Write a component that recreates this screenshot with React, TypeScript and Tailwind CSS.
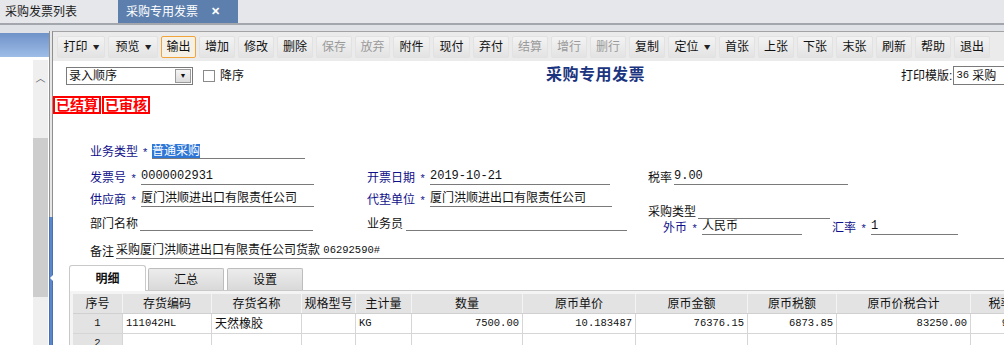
const F = "font-['Liberation_Sans','Noto_Sans_CJK_SC',sans-serif]";
const MONO = "font-['Liberation_Mono','Noto_Sans_CJK_SC',monospace]";

function Btn({ label, w, off, drop, hot }: { label: string; w: string; off?: boolean; drop?: boolean; hot?: boolean }) {
  return (
    <div
      className={`${w} h-[22px] flex items-center justify-center gap-[6px] rounded-[2px] border text-[12px] leading-[14px] ${
        hot
          ? "border-[#f0a43a] bg-[#f6f1e6]"
          : "border-[#e2e2e2] bg-gradient-to-b from-[#f3f3f3] to-[#e3e3e3]"
      } ${off ? "text-[#9a9a9a]" : "text-[#111]"}`}
    >
      <span>{label}</span>
      {drop && <span className="text-[10px] leading-[10px] text-[#222] scale-x-125">▾</span>}
    </div>
  );
}

function Star() {
  return <span className="w-[15px] text-center text-[11px] leading-[14px] text-[#10108a]">*</span>;
}

function Box({ w, children, mono }: { w: string; children?: React.ReactNode; mono?: boolean }) {
  return (
    <div className={`${w} h-[16px] border-b border-[#7a7a7a] flex items-end text-[12px] leading-[15px] whitespace-nowrap ${mono ? MONO + " text-[10.5px]" : ""}`}>
      {children}
    </div>
  );
}

const cols = [
  { t: "序号", w: "w-[50px]" },
  { t: "存货编码", w: "w-[89px]" },
  { t: "存货名称", w: "w-[90px]" },
  { t: "规格型号", w: "w-[54px]" },
  { t: "主计量", w: "w-[56px]" },
  { t: "数量", w: "w-[111px]" },
  { t: "原币单价", w: "w-[113px]" },
  { t: "原币金额", w: "w-[112px]" },
  { t: "原币税额", w: "w-[89px]" },
  { t: "原币价税合计", w: "w-[134px]" },
  { t: "税率", w: "w-[60px]" },
];

const row1 = ["1", "111042HL", "天然橡胶", "", "KG", "7500.00", "10.183487", "76376.15", "6873.85", "83250.00", "9.00"];

export default function App() {
  return (
    <div className={`${F} w-[1004px] h-[345px] overflow-hidden bg-[#dfe3e8] text-[#111]`}>
      {/* top tabs */}
      <div className="h-[23px] flex bg-[#e6e7eb]">
        <div className="w-[118px] pl-[5px] flex items-center text-[12px] text-[#1a1a1a]">采购发票列表</div>
        <div className="w-[120px] bg-[#5d7fad] flex items-center pl-[8px] gap-[13px] text-white text-[12px]">
          <span>采购专用发票</span>
          <span className="text-[11px] font-bold">✕</span>
        </div>
      </div>
      <div className="h-[2px] bg-[#a3a7ad]" />

      <div className="flex h-[320px]">
        {/* sidebar */}
        <div className="w-[49px] flex flex-col">
          <div className="h-[8px] shrink-0" />
          <div className="h-[24px] shrink-0 bg-gradient-to-b from-[#6f92c8] to-[#9ebde7]" />
          <div className="flex-1 flex bg-white">
            <div className="w-[33px]" />
            <div className="w-[15px] mt-[3px] flex flex-col bg-[#efefef]">
              <div className="h-[24px] shrink-0 flex items-end justify-center text-[10px] leading-[10px] text-[#555]">︿</div>
              <div className="h-[54px] shrink-0" />
              <div className="h-[159px] shrink-0 bg-[#cdcdcd]" />
            </div>
          </div>
        </div>
        {/* splitter */}
        <div className="w-[4px] flex flex-col">
          <div className="h-[6px] shrink-0" />
          <div className="h-[186px] shrink-0 border-x border-[#8f8f8f] bg-[#e6e6e6]" />
          <div className="flex-1 border-x border-[#4a70b0] bg-[#5b87cc] flex flex-col items-center">
            <div className="mt-[58px] w-0 h-0 border-y-[3px] border-y-transparent border-r-[3px] border-r-white" />
          </div>
        </div>

        {/* main */}
        <div className="flex-1 min-w-0 mt-[6px] border-t border-[#a3a3a3] bg-white overflow-hidden">
          <div className="h-[29px] bg-[#ebebeb] flex items-start pt-[4px] pl-[4px] gap-[3px]">
            <Btn label="打印" w="w-[48px]" drop />
            <Btn label="预览" w="w-[50px]" drop />
            <Btn label="输出" w="w-[35px]" hot />
            <Btn label="增加" w="w-[36px]" />
            <Btn label="修改" w="w-[36px]" />
            <Btn label="删除" w="w-[36px]" />
            <Btn label="保存" w="w-[36px]" off />
            <Btn label="放弃" w="w-[35px]" off />
            <Btn label="附件" w="w-[37px]" />
            <Btn label="现付" w="w-[37px]" />
            <Btn label="弃付" w="w-[36px]" />
            <Btn label="结算" w="w-[36px]" off />
            <Btn label="增行" w="w-[36px]" off />
            <Btn label="删行" w="w-[36px]" off />
            <Btn label="复制" w="w-[36px]" />
            <Btn label="定位" w="w-[48px]" drop />
            <Btn label="首张" w="w-[36px]" />
            <Btn label="上张" w="w-[36px]" />
            <Btn label="下张" w="w-[36px]" />
            <Btn label="末张" w="w-[37px]" />
            <Btn label="刷新" w="w-[36px]" />
            <Btn label="帮助" w="w-[36px]" />
            <Btn label="退出" w="w-[36px]" />
          </div>

          {/* header row */}
          <div className="h-[24px] flex items-end">
            <div className="ml-[13px] w-[127px] h-[18px] border border-[#7a7a7a] flex items-center">
              <span className="flex-1 pl-[2px] text-[12px] leading-[14px]">录入顺序</span>
              <div className="w-[16px] h-[14px] mr-px bg-gradient-to-b from-[#f5f5f5] to-[#dcdcdc] border border-[#9a9a9a] flex items-center justify-center text-[7px]">▼</div>
            </div>
            <div className="ml-[10px] mb-[3px] w-[12px] h-[12px] border border-[#8a8a8a] bg-white" />
            <span className="ml-[5px] mb-[1px] text-[12px] leading-[16px]">降序</span>
            <span className="ml-[302px] text-[16px] leading-[20px] font-bold text-[#1b3480] tracking-[0.5px]">采购专用发票</span>
            <span className="ml-[256px] mb-[1px] text-[12px] leading-[16px]">打印模版:</span>
            <div className="ml-[1px] h-[19px] flex-1 border border-[#7a7a7a] border-r-0 flex items-center pl-[2px] text-[12px] whitespace-nowrap overflow-hidden">
              <span className={`${MONO} text-[10.5px]`}>36</span>&nbsp;采购
            </div>
          </div>

          {/* stamps */}
          <div className="mt-[11px] flex gap-[1px]">
            <div className="h-[18px] w-[48px] border-2 border-[#ff0000] text-[#ff0000] font-bold text-[14px] leading-[14px] flex items-center justify-center">已结算</div>
            <div className="h-[18px] w-[48px] border-2 border-[#ff0000] text-[#ff0000] font-bold text-[14px] leading-[14px] flex items-center justify-center">已审核</div>
          </div>

          {/* form */}
          <div className="pl-[37px] text-[12px]">
            <div className="mt-[29px] flex items-end">
              <span className="leading-[14px] text-[#10108a]">业务类型</span>
              <span className="w-[14px] text-center text-[11px] leading-[14px] text-[#10108a]">*</span>
              <Box w="w-[153px]">
                <span className="bg-[#2f77d6] text-white leading-[14px]">普通采购</span>
              </Box>
            </div>

            <div className="mt-[10px] flex items-end">
              <div className="w-[277px] flex items-end">
                <span className="leading-[14px] text-[#10108a]">发票号</span>
                <Star />
                <Box w="w-[173px]" mono>0000002931</Box>
              </div>
              <div className="w-[281px] flex items-end">
                <span className="leading-[14px] text-[#10108a]">开票日期</span>
                <Star />
                <Box w="w-[180px]" mono>2019-10-21</Box>
              </div>
              <div className="flex items-end">
                <span className="leading-[14px]">税率</span>
                <div className="w-[2px]" />
                <Box w="w-[174px]" mono>9.00</Box>
              </div>
            </div>

            <div className="mt-[6px] flex">
              <div className="w-[558px] flex flex-col">
                <div className="flex items-end">
                  <div className="w-[277px] flex items-end">
                    <span className="leading-[14px] text-[#10108a]">供应商</span>
                    <Star />
                    <Box w="w-[173px]">厦门洪顺进出口有限责任公司</Box>
                  </div>
                  <div className="flex items-end">
                    <span className="leading-[14px] text-[#10108a]">代垫单位</span>
                    <Star />
                    <Box w="w-[182px]">厦门洪顺进出口有限责任公司</Box>
                  </div>
                </div>
                <div className="mt-[8px] flex items-end">
                  <div className="w-[277px] flex items-end">
                    <span className="leading-[14px]">部门名称</span>
                    <div className="w-[2px]" />
                    <Box w="w-[173px]" />
                  </div>
                  <div className="flex items-end">
                    <span className="leading-[14px]">业务员</span>
                    <div className="w-[3px]" />
                    <Box w="w-[221px]" />
                  </div>
                </div>
              </div>
              <div className="flex flex-col">
                <div className="mt-[12px] flex items-end">
                  <span className="leading-[14px]">采购类型</span>
                  <div className="w-[2px]" />
                  <Box w="w-[132px]" />
                </div>
                <div className="pl-[15px] flex items-end">
                  <span className="leading-[14px] text-[#10108a]">外币</span>
                  <Star />
                  <Box w="w-[100px]">人民币</Box>
                  <span className="ml-[30px] leading-[14px] text-[#10108a]">汇率</span>
                  <Star />
                  <Box w="w-[87px]" mono>1</Box>
                </div>
              </div>
            </div>

            <div className="mt-[7px] flex items-end">
              <span className="leading-[14px]">备注</span>
              <div className="w-[2px]" />
              <div className="flex-1 h-[17px] border-b border-[#7a7a7a] flex items-end leading-[15px] whitespace-nowrap">
                采购厦门洪顺进出口有限责任公司货款&nbsp;<span className={`${MONO} text-[10.5px]`}>06292590#</span>
              </div>
            </div>
          </div>

          {/* detail tabs */}
          <div className="mt-[7px] pl-[16px]">
            <div className="flex items-end border-b border-[#c9c9c9] h-[25px]">
              <div className="w-[77px] h-[26px] -mb-px rounded-t-[3px] border border-b-0 border-[#c9c9c9] bg-white flex items-center justify-center text-[12px] font-bold">明细</div>
              <div className="ml-[2px] w-[76px] h-[22px] rounded-t-[2px] border border-b-0 border-[#bdbdbd] bg-gradient-to-b from-[#ececec] to-[#d9d9d9] flex items-end justify-center pb-[1px] text-[12px]">汇总</div>
              <div className="ml-[3px] w-[76px] h-[22px] rounded-t-[2px] border border-b-0 border-[#bdbdbd] bg-gradient-to-b from-[#ececec] to-[#d9d9d9] flex items-end justify-center pb-[1px] text-[12px]">设置</div>
            </div>
            <div className="border-l border-[#c9c9c9] pl-[3px] pt-[3px] bg-[#f4f4f4]">
              <div className="flex h-[20px] bg-[#e3e3e3] border-b border-[#d0d0d0]">
                {cols.map((c) => (
                  <div key={c.t} className={`${c.w} shrink-0 border-r border-[#f4f4f4] flex items-center justify-center text-[12px] whitespace-nowrap`}>
                    {c.t}
                  </div>
                ))}
              </div>
              <div className="flex h-[20px] bg-white border-b border-[#d6d6d6]">
                {cols.map((c, i) => (
                  <div
                    key={c.t}
                    className={`${c.w} shrink-0 border-r border-[#d6d6d6] flex items-center px-[3px] whitespace-nowrap ${
                      i === 0 ? "justify-center bg-[#e3e3e3]" : i >= 5 ? "justify-end" : ""
                    } ${i === 2 ? "text-[12px]" : MONO + " text-[10.5px]"}`}
                  >
                    {row1[i]}
                  </div>
                ))}
              </div>
              <div className="flex h-[20px] bg-white">
                {cols.map((c, i) => (
                  <div
                    key={c.t}
                    className={`${c.w} shrink-0 border-r border-[#d6d6d6] flex items-center justify-center ${MONO} text-[10.5px] ${i === 0 ? "bg-[#e3e3e3]" : ""}`}
                  >
                    {i === 0 ? "2" : ""}
                  </div>
                ))}
              </div>
            </div>
          </div>
        </div>
      </div>
    </div>
  );
}
